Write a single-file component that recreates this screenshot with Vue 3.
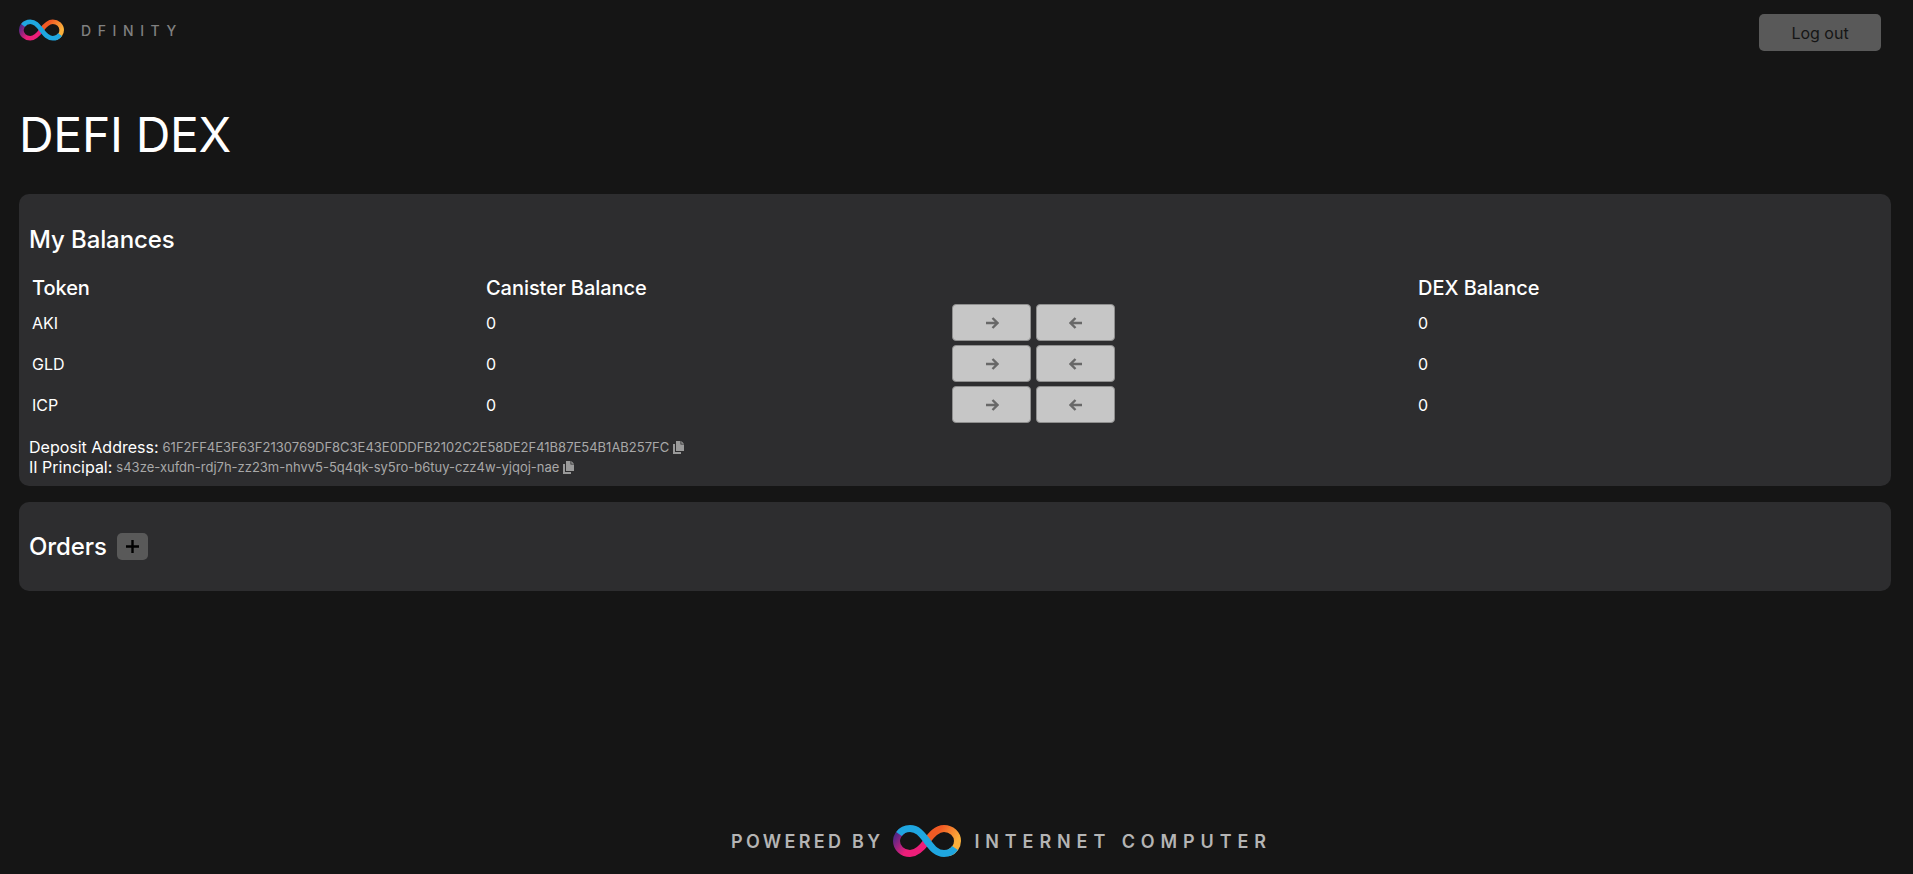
<template>
  <div class="page">
    <svg class="defs" width="0" height="0" aria-hidden="true">
      <defs>
        <linearGradient id="loopLeft" gradientUnits="userSpaceOnUse" x1="4" y1="8" x2="28" y2="26">
          <stop offset="0" stop-color="#522785" />
          <stop offset="0.6" stop-color="#ed1e79" />
        </linearGradient>
        <linearGradient id="loopRight" gradientUnits="userSpaceOnUse" x1="38" y1="6" x2="64" y2="24">
          <stop offset="0.2" stop-color="#f15a24" />
          <stop offset="0.85" stop-color="#fbb03b" />
        </linearGradient>
        <symbol id="infinity" viewBox="0 0 68 32">
          <path d="M10 5.500C6 8 3.500 12 3.500 16C3.500 23 9.500 28.500 17 28.500C24 28.500 29 23 34 16" fill="none" stroke="url(#loopLeft)" stroke-width="7" />
          <path d="M33.500 16.500C38.500 9.500 43.500 3.500 51 3.500C58.500 3.500 64.500 9 64.500 16C64.500 21 61 26 56 27.800" fill="none" stroke="url(#loopRight)" stroke-width="7" />
          <path d="M6 9C8.500 5.500 12 3.500 17 3.500C25 3.500 29 9.500 34 16C39 22.500 43 28.500 51 28.500C56 28.500 60 26 62 23" fill="none" stroke="#1fa6e0" stroke-width="7" />
        </symbol>
      </defs>
    </svg>

    <header class="topbar">
      <div class="brand">
        <svg class="brand-logo"><use href="#infinity" /></svg>
        <span class="brand-name">DFINITY</span>
      </div>
      <button class="logout">Log out</button>
    </header>

    <h1 class="title">DEFI DEX</h1>

    <section class="card balances">
      <h2>My Balances</h2>
      <table>
        <colgroup>
          <col class="col-token" />
          <col class="col-canister" />
          <col class="col-actions" />
          <col />
        </colgroup>
        <thead>
          <tr>
            <th>Token</th>
            <th>Canister Balance</th>
            <th></th>
            <th>DEX Balance</th>
          </tr>
        </thead>
        <tbody>
          <tr v-for="token in tokens" :key="token">
            <td>{{ token }}</td>
            <td>0</td>
            <td class="actions">
              <button class="arrow-btn">
                <svg viewBox="0 0 14 14"><path d="M1 7H12.500M7.500 2L12.500 7L7.500 12" /></svg>
              </button>
              <button class="arrow-btn">
                <svg viewBox="0 0 14 14"><path d="M13 7H1.500M6.500 2L1.500 7L6.500 12" /></svg>
              </button>
            </td>
            <td>0</td>
          </tr>
        </tbody>
      </table>
      <div class="ids">
        <div v-for="row in addresses" :key="row.label" class="id-row">
          <span>{{ row.label }}:</span>
          <span class="id-value">{{ row.value }}</span>
          <svg class="copy" viewBox="0 0 11 13">
            <path d="M0 3H2V11H8V13H0Z" />
            <path d="M3 0H7.500V3.500H11V10H3Z" />
            <path d="M8.300 0L11 2.700H8.300Z" />
          </svg>
        </div>
      </div>
    </section>

    <section class="card orders">
      <h2>Orders</h2>
      <button class="add">
        <svg viewBox="0 0 13 13"><path d="M6.500 0V13M0 6.500H13" /></svg>
      </button>
    </section>

    <footer class="footer">
      <span class="powered">POWERED BY</span>
      <svg class="footer-logo"><use href="#infinity" /></svg>
      <span class="ic">INTERNET COMPUTER</span>
    </footer>
  </div>
</template>

<script setup>
const tokens = ['AKI', 'GLD', 'ICP']

const addresses = [
  {
    label: 'Deposit Address',
    value: '61F2FF4E3F63F2130769DF8C3E43E0DDFB2102C2E58DE2F41B87E54B1AB257FC',
  },
  {
    label: 'II Principal',
    value: 's43ze-xufdn-rdj7h-zz23m-nhvv5-5q4qk-sy5ro-b6tuy-czz4w-yjqoj-nae',
  },
]
</script>

<style>
body {
  background: #151515;
}
</style>

<style scoped>
.page {
  min-height: 874px;
  box-sizing: border-box;
  padding: 0 22px 0 19px;
  display: flex;
  flex-direction: column;
  background: #151515;
  color: #fff;
  font-family: Inter, 'Liberation Sans', sans-serif;
  font-size: 16px;
}

.defs {
  position: absolute;
}

.topbar {
  display: flex;
  justify-content: space-between;
  align-items: flex-start;
  padding-right: 10px;
  height: 51px;
}

.brand {
  display: flex;
  align-items: center;
  gap: 17px;
  padding-top: 19px;
}

.brand-logo {
  width: 45px;
  height: 22px;
}

.brand-name {
  color: #808080;
  font-size: 14px;
  font-weight: 500;
  letter-spacing: 6.6px;
}

.logout {
  margin-top: 14px;
  width: 122px;
  height: 37px;
  border: none;
  border-radius: 5px;
  background: #595959;
  color: #151515;
  font: inherit;
}

.title {
  margin: 55px 0 0;
  font-size: 48px;
  font-weight: 400;
  line-height: 58px;
  letter-spacing: -0.3px;
}

.card {
  background: #2d2d2f;
  border-radius: 10px;
}

.balances {
  margin-top: 30px;
  height: 292px;
  box-sizing: border-box;
  padding: 32px 10px 0;
}

h2 {
  margin: 0;
  font-size: 24px;
  font-weight: 450;
  line-height: 28px;
  letter-spacing: -0.1px;
}

table {
  width: 100%;
  margin-top: 19px;
  table-layout: fixed;
  border-collapse: collapse;
}

.col-token {
  width: 454px;
}

.col-canister,
.col-actions {
  width: 466px;
}

th {
  padding: 0 3px;
  height: 29px;
  text-align: left;
  font-size: 20px;
  font-weight: 450;
  line-height: 24px;
  letter-spacing: -0.05px;
}

td {
  padding: 0 3px;
  height: 41px;
}

.actions {
  padding-left: 3px;
}

.arrow-btn {
  width: 79px;
  height: 37px;
  margin-right: 5px;
  padding: 0;
  border: 1px solid #8e8e8e;
  border-radius: 4px;
  background: #c6c6c6;
  vertical-align: middle;
}

.arrow-btn svg {
  display: block;
  width: 14px;
  height: 14px;
  margin: 0 auto;
  fill: none;
  stroke: #686868;
  stroke-width: 2.4;
}

.ids {
  margin-top: 12px;
}

.id-row {
  display: flex;
  align-items: center;
  height: 20px;
  line-height: 20px;
}

.id-value {
  margin-left: 4px;
  color: #a8a8a8;
  font-size: 13px;
}

.copy {
  width: 11px;
  height: 13px;
  margin-left: 4px;
  fill: #9a9a9a;
}

.orders {
  margin-top: 16px;
  height: 89px;
  box-sizing: border-box;
  padding-left: 10px;
  display: flex;
  align-items: center;
  gap: 10px;
}

.add {
  width: 31px;
  height: 27px;
  padding: 0;
  border: none;
  border-radius: 5px;
  background: #595959;
}

.add svg {
  display: block;
  width: 13px;
  height: 13px;
  margin: 0 auto;
  fill: none;
  stroke: #000;
  stroke-width: 2.4;
}

.footer {
  margin-top: auto;
  margin-bottom: 8px;
  margin-left: 93px;
  height: 50px;
  display: flex;
  justify-content: center;
  align-items: center;
  color: #b4b4b4;
  font-size: 18px;
  font-weight: 600;
}

.powered {
  letter-spacing: 3.3px;
}

.footer-logo {
  width: 68px;
  height: 32px;
  margin: 0 13px 0 10px;
}

.ic {
  letter-spacing: 5.9px;
}
</style>
